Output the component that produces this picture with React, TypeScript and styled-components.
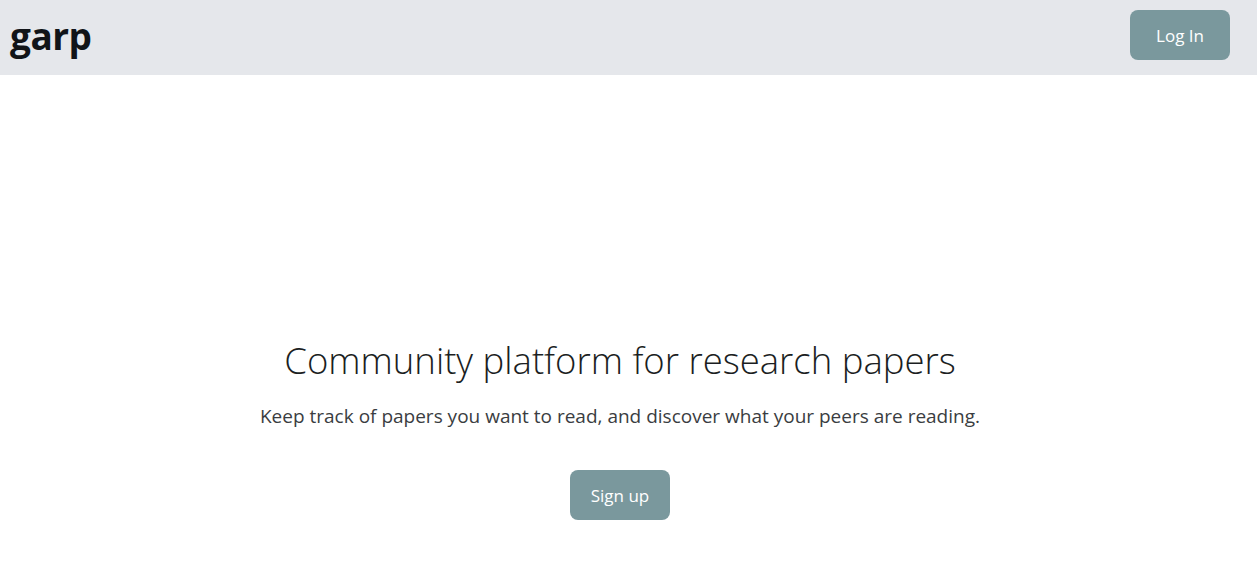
import React from "react";
import styled, { createGlobalStyle } from "styled-components";

const Global = createGlobalStyle`
  html, body { margin: 0; padding: 0; background: #ffffff; }
  body { font-family: "Open Sans", "Noto Sans", sans-serif; color: #212529; }
`;

const Page = styled.div`
  width: 1257px;
  min-height: 577px;
  display: flex;
  flex-direction: column;
`;

const NavBar = styled.header`
  height: 75px;
  background: #e5e7eb;
  display: flex;
  align-items: flex-start;
  justify-content: space-between;
  padding: 10px 27px 0 10px;
  box-sizing: border-box;
`;

const Brand = styled.div`
  font-family: "Open Sans", sans-serif;
  font-weight: 700;
  font-size: 37px;
  line-height: 50px;
  color: #111418;
  letter-spacing: -0.5px;
  margin-top: 1px;
`;

const Button = styled.button`
  width: 100px;
  height: 50px;
  border: none;
  border-radius: 8px;
  background: #7a989d;
  color: #ffffff;
  font-family: "Open Sans", sans-serif;
  font-size: 17px;
  font-weight: 400;
  cursor: pointer;
  padding: 0;
`;

const Hero = styled.main`
  width: 1240px;
  display: flex;
  flex-direction: column;
  align-items: center;
  padding-top: 261px;
`;

const Title = styled.h1`
  margin: 0;
  font-weight: 300;
  font-size: 36.5px;
  line-height: 48px;
  color: #1b1e22;
`;

const Lead = styled.p`
  margin: 18px 0 0;
  font-weight: 400;
  font-size: 19px;
  line-height: 28px;
  color: #3a3d41;
`;

const SignUp = styled(Button)`
  margin-top: 40px;
`;

export default function App() {
  return (
    <Page>
      <Global />
      <NavBar>
        <Brand>garp</Brand>
        <Button>Log In</Button>
      </NavBar>
      <Hero>
        <Title>Community platform for research papers</Title>
        <Lead>Keep track of papers you want to read, and discover what your peers are reading.</Lead>
        <SignUp>Sign up</SignUp>
      </Hero>
    </Page>
  );
}
